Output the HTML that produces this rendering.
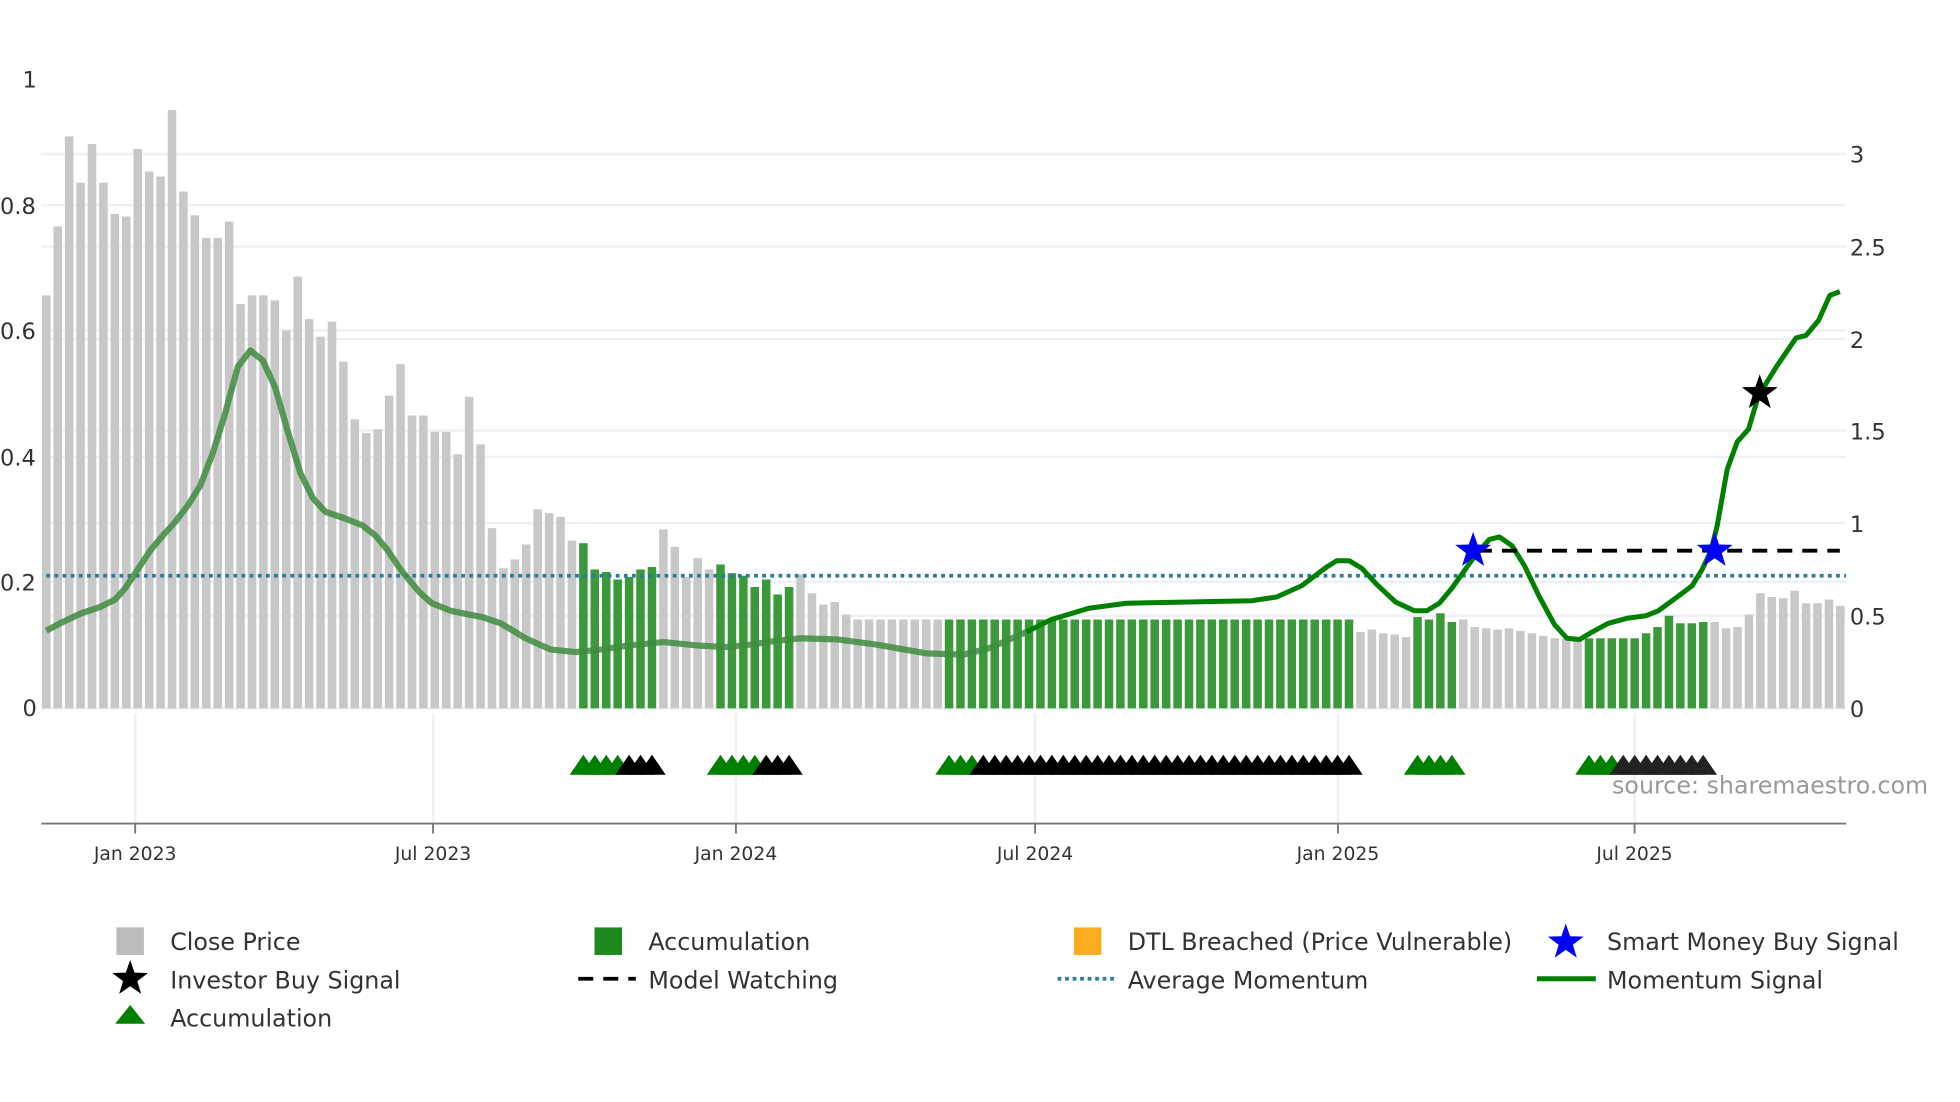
<!DOCTYPE html>
<html><head><meta charset="utf-8"><style>
html,body{margin:0;padding:0;background:#fff;}
svg{display:block;font-family:"DejaVu Sans","Liberation Sans",sans-serif;}
</style></head><body>
<svg id="c" width="1960" height="1102" viewBox="0 0 1566 880.5" preserveAspectRatio="none" xmlns="http://www.w3.org/2000/svg">
<rect width="1566" height="880.5" fill="#fff"/>
<g id="grid" stroke="#edf0f5" stroke-width="2">
<line x1="33" x2="1475" y1="123" y2="123"/><line x1="33" x2="1475" y1="164" y2="164"/>
<line x1="33" x2="1475" y1="197" y2="197"/><line x1="33" x2="1475" y1="264" y2="264"/>
<line x1="33" x2="1475" y1="271" y2="271"/><line x1="33" x2="1475" y1="344" y2="344"/>
<line x1="33" x2="1475" y1="365" y2="365"/><line x1="33" x2="1475" y1="418" y2="418"/>
<line x1="33" x2="1475" y1="465" y2="465"/><line x1="33" x2="1475" y1="492" y2="492"/>
<line x1="33" x2="1475" y1="566" y2="566"/>
<line x1="108" x2="108" y1="570" y2="658"/><line x1="346" x2="346" y1="570" y2="658"/>
<line x1="588" x2="588" y1="570" y2="658"/><line x1="827" x2="827" y1="570" y2="658"/>
<line x1="1069" x2="1069" y1="570" y2="658"/><line x1="1306" x2="1306" y1="570" y2="658"/>
</g>
<g id="bars"></g>
<line x1="37" x2="1475" y1="460" y2="460" stroke="#2b7aa0" stroke-width="3" stroke-dasharray="3 3.5"/>
<polyline id="m1" fill="none" stroke="#3f8c3f" stroke-opacity="0.85" stroke-width="5" stroke-linejoin="round"/>
<polyline id="m2" fill="none" stroke="#008000" stroke-width="4" stroke-linejoin="round"/>
<line x1="1180" x2="1470" y1="440" y2="440" stroke="#000" stroke-width="3" stroke-dasharray="12 8"/>
<g id="tri"></g>
<g id="stars"></g>
<text x="1288" y="634" font-size="19" fill="#999">source: sharemaestro.com</text>
<line x1="33" x2="1475" y1="658" y2="658" stroke="#777" stroke-width="1.5"/>
<g stroke="#777" stroke-width="1.5">
<line x1="108" x2="108" y1="658" y2="666"/><line x1="346" x2="346" y1="658" y2="666"/>
<line x1="588" x2="588" y1="658" y2="666"/><line x1="827" x2="827" y1="658" y2="666"/>
<line x1="1069" x2="1069" y1="658" y2="666"/><line x1="1306" x2="1306" y1="658" y2="666"/>
</g>
<g font-size="15" fill="#333" text-anchor="middle">
<text x="108" y="687">Jan 2023</text><text x="346" y="687">Jul 2023</text>
<text x="588" y="687">Jan 2024</text><text x="827" y="687">Jul 2024</text>
<text x="1069" y="687">Jan 2025</text><text x="1306" y="687">Jul 2025</text>
</g>
<g font-size="18" fill="#333">
<text x="18" y="70">1</text><text x="0" y="171">0.8</text><text x="0" y="271">0.6</text>
<text x="0" y="372">0.4</text><text x="0" y="472">0.2</text><text x="18" y="572">0</text>
<text x="1478" y="130">3</text><text x="1478" y="204">2.5</text><text x="1478" y="278">2</text>
<text x="1478" y="351">1.5</text><text x="1478" y="425">1</text><text x="1478" y="499">0.5</text>
<text x="1478" y="573">0</text>
</g>
<g font-size="19" fill="#333">
<rect x="93" y="741" width="22" height="22" fill="#bbb"/><text x="136" y="759">Close Price</text>
<rect x="475" y="741" width="22" height="22" fill="#1e8a1e"/><text x="518" y="759">Accumulation</text>
<rect x="858" y="741" width="22" height="22" fill="#f9ac1e"/><text x="901" y="759">DTL Breached (Price Vulnerable)</text>
<text x="1284" y="759">Smart Money Buy Signal</text>
<text x="136" y="790">Investor Buy Signal</text>
<line x1="462" x2="508" y1="782" y2="782" stroke="#000" stroke-width="3" stroke-dasharray="12 8"/><text x="518" y="790">Model Watching</text>
<line x1="845" x2="890" y1="782" y2="782" stroke="#2b7aa0" stroke-width="3" stroke-dasharray="3 3"/><text x="901" y="790">Average Momentum</text>
<line x1="1228" x2="1275" y1="782" y2="782" stroke="#008000" stroke-width="4"/><text x="1284" y="790">Momentum Signal</text>
<polygon points="104,803 116,818 92,818" fill="#008000"/><text x="136" y="820">Accumulation</text>
</g>
<g id="lstars"></g>
</svg>
<script>
var NS="http://www.w3.org/2000/svg";
function el(t,a,p){var e=document.createElementNS(NS,t);for(var k in a)e.setAttribute(k,a[k]);document.getElementById(p).appendChild(e);return e;}
var tops=[236,181,109,146,115,146,171,173,119,137,141,88,153,172,190,190,177,243,236,236,240,264,221,255,269,257,289,335,346,343,316,291,332,332,345,345,363,317,355,422,454,447,435,407,410,413,432,
434,455,457,463,461,455,453,
423,437,461,446,455,
451,458,460,469,463,475,469,
459,474,483,481,491,495,495,495,495,495,495,495,495];
for(var i=0;i<36;i++)tops.push(495);
tops=tops.concat([505,503,506,507,509,493,495,490,497,495,501,502,503,502,504,506,508,510,510,511,510,510,510,510,510,506,501,492,498,498,497,497,502,501,491,474,477,478,472,482,482,479,484]);
function green(i){return (i>=47&&i<=53)||(i>=59&&i<=65)||(i>=79&&i<=114)||(i>=120&&i<=123)||(i>=135&&i<=145);}
function bx(i){return 37+i*9.13;}
for(var i=0;i<tops.length;i++){el("rect",{x:bx(i)-3.4,y:tops[i],width:6.8,height:566-tops[i],fill:green(i)?"#3a9a3a":"#c8c8c8"},"bars");}
var pts=[[37,504],[50,497],[65,490],[80,485],[92,479],[100,470],[110,455],[120,440],[130,428],[140,417],[150,404],[160,388],[170,362],[180,330],[190,293],[200,280],[210,288],[220,310],[230,345],[240,378],[250,398],[260,409],[275,414],[290,420],[300,428],[310,440],[320,455],[335,473],[345,482],[360,488],[385,493],[400,498],[420,510],[440,519],[460,521],[480,519],[500,516],[530,513],[560,516],[580,517],[600,515],[620,512],[640,510],[670,511],[700,515],[740,522],[770,523],[790,518],[820,505],[840,495],[870,486],[900,482],[950,481],[1000,480],[1020,477],[1040,468],[1060,453],[1068,448],[1078,448],[1088,454],[1100,467],[1115,481],[1130,488],[1140,488],[1150,482],[1160,470],[1170,456],[1180,442],[1190,431],[1198,429],[1208,436],[1218,452],[1230,477],[1242,499],[1252,510],[1262,511],[1272,505],[1285,498],[1300,494],[1315,492],[1325,488],[1340,477],[1352,468],[1360,455],[1367,440],[1372,420],[1380,375],[1388,353],[1397,343],[1405,316],[1420,292],[1435,270],[1443,268],[1453,256],[1462,236],[1470,233]];
var a=[],b=[];pts.forEach(function(p){if(p[0]<=820)a.push(p.join(","));if(p[0]>=820)b.push(p.join(","));});
document.getElementById("m1").setAttribute("points",a.join(" "));
document.getElementById("m2").setAttribute("points",b.join(" "));
function tri(i,c){var x=bx(i);el("polygon",{points:(x-11)+",619 "+x+",603 "+(x+11)+",619",fill:c},"tri");}
function rng(s,e,c){for(var i=s;i<=e;i++)tri(i,c);}
rng(47,50,"#008000");rng(51,53,"#000");rng(59,62,"#008000");rng(63,65,"#000");
rng(79,81,"#008000");rng(82,114,"#000");rng(120,123,"#008000");rng(135,137,"#008000");rng(138,145,"#222");
function star(cx,cy,R,c,p){var s=[];for(var k=0;k<10;k++){var r=k%2?R*0.4:R;var an=-Math.PI/2+k*Math.PI/5;s.push((cx+r*Math.cos(an)).toFixed(1)+","+(cy+r*Math.sin(an)).toFixed(1));}el("polygon",{points:s.join(" "),fill:c},p);}
star(1177,440,15,"#0000ff","stars");star(1370,440,15,"#0000ff","stars");star(1406,314,15,"#000","stars");
star(1251,753,15,"#0000ff","lstars");star(104,782,15,"#000","lstars");
</script>
</body></html>
